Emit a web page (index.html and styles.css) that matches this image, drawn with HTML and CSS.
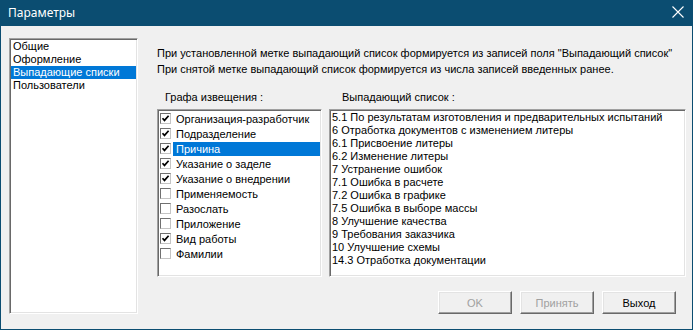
FILE: index.html
```html
<!DOCTYPE html>
<html lang="ru">
<head>
  <meta charset="utf-8">
  <title>Параметры</title>
  <link rel="stylesheet" href="styles.css">
</head>
<body>
  <div class="dialog">
    <!-- Title bar -->
    <div class="titlebar">
      <span class="title">Параметры</span>
      <svg class="close" width="12" height="12" viewBox="0 0 12 12">
        <path d="M0.5 0.5 L11.5 11.5 M11.5 0.5 L0.5 11.5" stroke="#fff" stroke-width="1.1" fill="none"/>
      </svg>
    </div>

    <div class="content">
      <!-- Section list -->
      <div class="listbox sections">
        <div class="row">Общие</div>
        <div class="row">Оформление</div>
        <div class="row selected">Выпадающие списки</div>
        <div class="row">Пользователи</div>
      </div>

      <div class="panel">
        <p class="description">
          При установленной метке выпадающий список формируется из записей поля "Выпадающий список"<br>
          При снятой метке выпадающий список формируется из числа записей введенных ранее.
        </p>

        <div class="columns">
          <div class="group fields">
            <div class="group-label">Графа извещения :</div>
            <div class="listbox checklist">
              <div class="check-row"><span class="box checked"></span><span class="label">Организация-разработчик</span></div>
              <div class="check-row"><span class="box checked"></span><span class="label">Подразделение</span></div>
              <div class="check-row"><span class="box checked"></span><span class="label selected">Причина</span></div>
              <div class="check-row"><span class="box checked"></span><span class="label">Указание о заделе</span></div>
              <div class="check-row"><span class="box checked"></span><span class="label">Указание о внедрении</span></div>
              <div class="check-row"><span class="box"></span><span class="label">Применяемость</span></div>
              <div class="check-row"><span class="box"></span><span class="label">Разослать</span></div>
              <div class="check-row"><span class="box"></span><span class="label">Приложение</span></div>
              <div class="check-row"><span class="box checked"></span><span class="label">Вид работы</span></div>
              <div class="check-row"><span class="box"></span><span class="label">Фамилии</span></div>
            </div>
          </div>

          <div class="group values">
            <div class="group-label">Выпадающий список :</div>
            <div class="listbox textlist">
              <div class="row">5.1 По результатам изготовления и предварительных испытаний</div>
              <div class="row">6 Отработка документов с изменением литеры</div>
              <div class="row">6.1 Присвоение литеры</div>
              <div class="row">6.2 Изменение литеры</div>
              <div class="row">7 Устранение ошибок</div>
              <div class="row">7.1 Ошибка в расчете</div>
              <div class="row">7.2 Ошибка в графике</div>
              <div class="row">7.5 Ошибка в выборе массы</div>
              <div class="row">8 Улучшение качества</div>
              <div class="row">9 Требования заказчика</div>
              <div class="row">10 Улучшение схемы</div>
              <div class="row">14.3 Отработка документации</div>
            </div>
          </div>
        </div>

        <div class="buttons">
          <button class="btn" disabled>OK</button>
          <button class="btn" disabled>Принять</button>
          <button class="btn">Выход</button>
        </div>
      </div>
    </div>
  </div>
</body>
</html>
```

FILE: styles.css
```css
body {
  margin: 0;
  font-family: "Liberation Sans", Arial, sans-serif;
  font-size: 11px;
  color: #000;
  background-color: #f0f0f0;
}

.dialog {
  width: 693px;
  height: 330px;
  box-sizing: border-box;
  border: 1px solid #0b4d71;
  border-top: none;
  background-color: #f0f0f0;
  display: flex;
  flex-direction: column;
}

.titlebar {
  height: 26px;
  flex: none;
  margin: 0 -1px;
  background-color: #0b4d71;
  color: #fff;
  display: flex;
  align-items: center;
  justify-content: space-between;
  padding: 0 9px 0 8px;
}

.title {
  font-family: "Noto Sans", sans-serif;
  font-size: 12px;
  margin-top: -1px;
}

.close {
  margin-top: -2px;
}

.content {
  flex: 1;
  display: flex;
  padding: 12px 0 0 8px;
}

/* sunken listbox frame */
.listbox {
  box-sizing: border-box;
  background-color: #fff;
  border: 1px solid;
  border-color: #a0a0a0 #fff #fff #a0a0a0;
  box-shadow: inset 1px 1px 0 #696969, inset -1px -1px 0 #e3e3e3;
  padding: 1px;
  overflow: hidden;
}

.row {
  height: 13px;
  line-height: 13px;
  white-space: nowrap;
}

.selected {
  background-color: #0078d7;
  color: #fff;
}

.sections {
  width: 129px;
  height: 276px;
  flex: none;
}

.sections .row {
  padding-left: 2px;
}

.panel {
  flex: 1;
  display: flex;
  flex-direction: column;
  padding-left: 19px;
}

.description {
  margin: 7px 0 0 0;
  line-height: 16px;
  white-space: nowrap;
}

.columns {
  display: flex;
  gap: 7px;
  margin-top: 12px;
}

.group-label {
  line-height: 16px;
  margin-bottom: 4px;
}

.fields .group-label {
  padding-left: 8px;
}

.values .group-label {
  padding-left: 13px;
}

.checklist {
  width: 165px;
  height: 168px;
}

.check-row {
  height: 15px;
  display: flex;
  align-items: center;
}

.box {
  width: 11px;
  height: 11px;
  box-sizing: border-box;
  margin-left: 1px;
  border: 1px solid;
  border-color: #707070 #c4c4c4 #c4c4c4 #707070;
  background-color: #fff;
  flex: none;
}

.box.checked {
  background: #fff url("data:image/svg+xml;utf8,<svg xmlns='http://www.w3.org/2000/svg' width='9' height='9'><path d='M1.5 4.2 L3.5 6.4 L7.6 1.8' stroke='black' stroke-width='1.7' fill='none'/></svg>") no-repeat center;
}

.label {
  margin-left: 2px;
  padding-left: 3px;
  line-height: 14px;
  flex: 1;
  white-space: nowrap;
}

.textlist {
  width: 357px;
  height: 168px;
}

.textlist .row {
  padding-left: 1px;
}

.buttons {
  display: flex;
  justify-content: flex-end;
  gap: 8px;
  margin-top: 14px;
  padding-right: 16px;
}

.btn {
  width: 74px;
  height: 23px;
  font-family: "Liberation Sans", Arial, sans-serif;
  font-size: 11px;
  color: #000;
  background-color: #f0f0f0;
  border: 1px solid;
  border-color: #fff #696969 #696969 #fff;
  box-shadow: inset -1px -1px 0 #a0a0a0, inset 1px 1px 0 #e3e3e3;
  padding: 0;
}

.btn:disabled {
  color: #a0a0a0;
}
```
